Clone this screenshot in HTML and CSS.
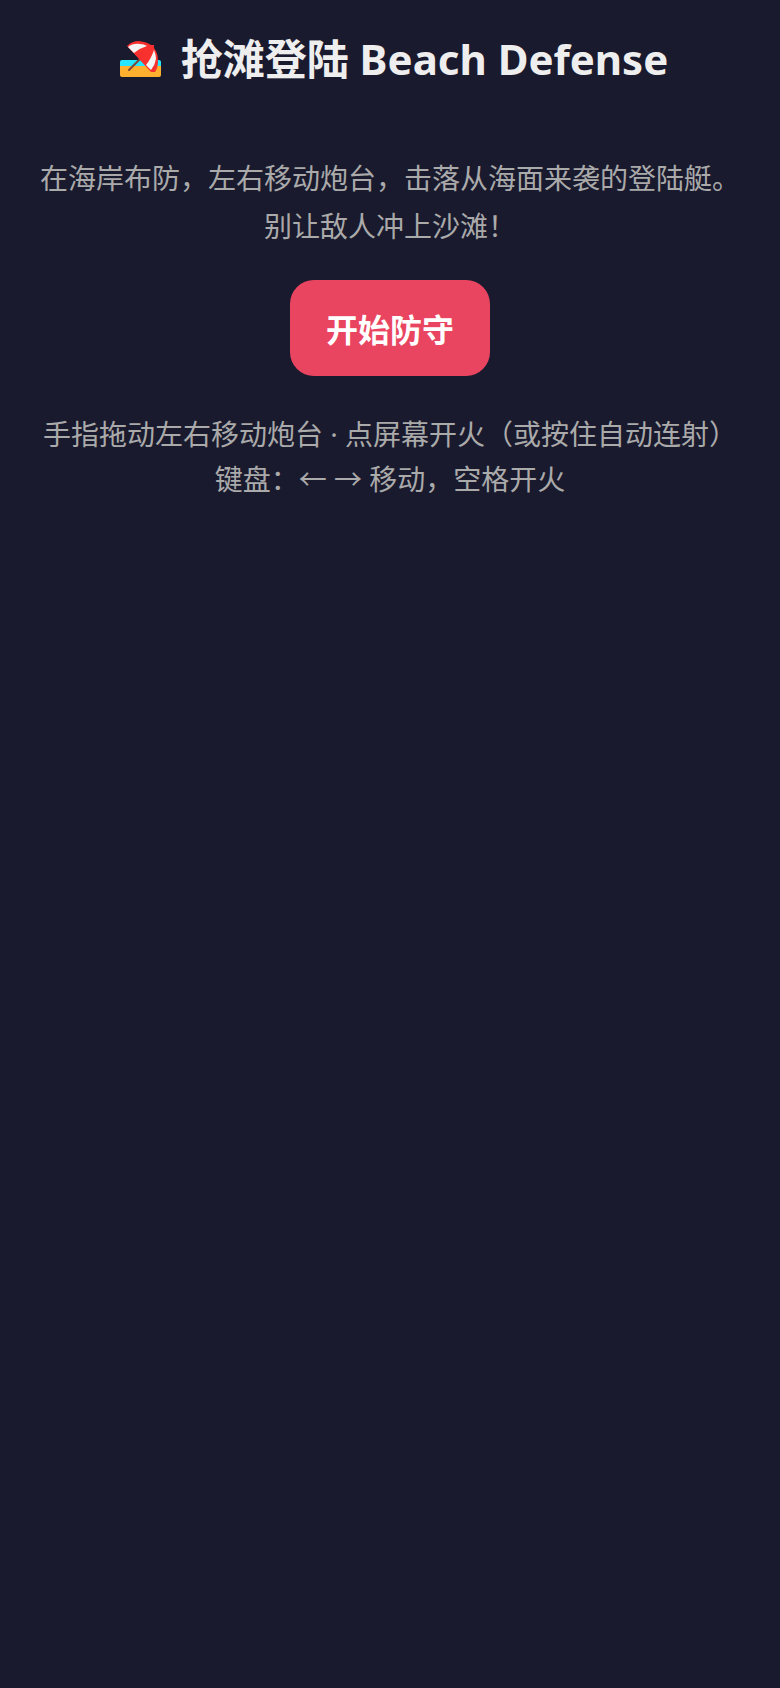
FILE: index.html
```html
<!DOCTYPE html>
<html lang="zh-CN">
<head>
<meta charset="utf-8">
<meta name="viewport" content="width=device-width, initial-scale=1">
<title>抢滩登陆 Beach Defense</title>
<link rel="stylesheet" href="styles.css">
</head>
<body>
<main class="game">
  <header class="header">
    <svg class="logo" viewBox="0 0 41 36" aria-hidden="true">
      <path fill="#26e5ff" d="M2 19h37q2 0 2 2v5H0v-5q0-2 2-2z"/>
      <path fill="#ffb02e" d="M0 25h41v9q0 2-2 2H2q-2 0-2-2z"/>
      <path stroke="#7d4533" stroke-width="2" stroke-linecap="round" d="M9 29L20 18"/>
      <path fill="#f8312f" d="M7 5Q12 0 19 0Q27 1 31 4L34 4L34 7Q38 12 38 20Q38 27 35 31L31 31Z"/>
      <path fill="#f4f4f4" d="M8 6Q13 2 20 3Q24 3 27 5Q20 7 14 12Z"/>
      <path fill="#f4f4f4" d="M34 9Q36 14 36 18Q35 24 31 29L26 24Q31 18 34 9Z"/>
    </svg>
    <h1 class="title">抢滩登陆 Beach Defense</h1>
  </header>
  <p class="intro">在海岸布防，左右移动炮台，击落从海面来袭的登陆艇。<br>别让敌人冲上沙滩！</p>
  <button class="start" type="button">开始防守</button>
  <p class="hint">手指拖动左右移动炮台 · 点屏幕开火（或按住自动连射）<br>键盘：← → 移动，空格开火</p>
</main>
</body>
</html>
```
FILE: styles.css
```css
* {
  box-sizing: border-box;
}

body {
  margin: 0;
  min-height: 100vh;
  background: #1a1a2e;
  color: #eee;
  font-family: "Noto Sans", "Noto Sans CJK SC", sans-serif;
}

.game {
  display: flex;
  flex-direction: column;
  align-items: center;
  padding: 31px 24px;
  text-align: center;
}

.header {
  display: flex;
  align-items: center;
  gap: 20px;
  margin-bottom: 67px;
  padding-left: 8px;
}

.logo {
  width: 41px;
  height: 36px;
}

.title {
  margin: 0;
  font-size: 42px;
  line-height: 56px;
  font-weight: 700;
}

.intro,
.hint {
  margin: 0;
  color: #aaa;
  font-size: 28px;
}

.intro {
  margin-bottom: 30px;
  line-height: 48px;
}

.start {
  margin-bottom: 36px;
  padding: 24px 36px;
  border: 0;
  border-radius: 24px;
  background: #e94560;
  color: #fff;
  font-family: "Noto Sans CJK SC", sans-serif;
  font-size: 32px;
  line-height: 48px;
  font-weight: 700;
  cursor: pointer;
}

.hint {
  line-height: 45px;
}
```
